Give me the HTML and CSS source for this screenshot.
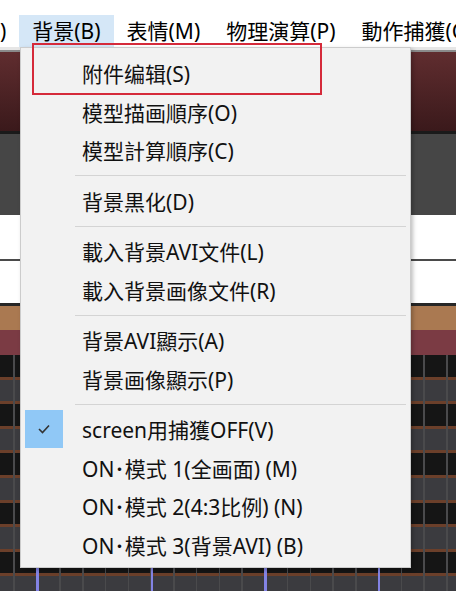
FILE: index.html
```html
<!DOCTYPE html>
<html lang="zh">
<head>
    <meta charset="UTF-8">
    <meta name="viewport" content="width=device-width, initial-scale=1.0">
    <title>背景メニュー</title>
    <link rel="stylesheet" href="styles.css">
</head>
<body>
    <div class="screen">
        <div class="menubar">
            <span class="menubar-item first">)</span>
            <span class="menubar-item open">背景(B)</span>
            <span class="menubar-item">表情(M)</span>
            <span class="menubar-item">物理演算(P)</span>
            <span class="menubar-item">動作捕獲(C)</span>
        </div>

        <div class="toolstrip"></div>
        <div class="viewport"></div>
        <div class="props"></div>
        <div class="field"></div>
        <div class="field last"></div>
        <div class="track-head"></div>
        <div class="track-key"></div>
        <div class="timeline"></div>

        <div class="menu">
            <div class="menu-item"><span class="gutter"></span>附件编辑(S)</div>
            <div class="menu-item"><span class="gutter"></span>模型描画順序(O)</div>
            <div class="menu-item"><span class="gutter"></span>模型計算順序(C)</div>
            <div class="separator"></div>
            <div class="menu-item"><span class="gutter"></span>背景黒化(D)</div>
            <div class="separator"></div>
            <div class="menu-item"><span class="gutter"></span>載入背景AVI文件(L)</div>
            <div class="menu-item"><span class="gutter"></span>載入背景画像文件(R)</div>
            <div class="separator"></div>
            <div class="menu-item"><span class="gutter"></span>背景AVI顯示(A)</div>
            <div class="menu-item"><span class="gutter"></span>背景画像顯示(P)</div>
            <div class="separator"></div>
            <div class="menu-item">
                <span class="gutter">
                    <span class="check">
                        <svg width="12" height="10" viewBox="0 0 12 10">
                            <polyline points="1,5 4.5,8.5 11,1.5" fill="none" stroke="#333" stroke-width="1.6"/>
                        </svg>
                    </span>
                </span>screen用捕獲OFF(V)
            </div>
            <div class="menu-item"><span class="gutter"></span>ON･模式 1(全画面) (M)</div>
            <div class="menu-item"><span class="gutter"></span>ON･模式 2(4:3比例) (N)</div>
            <div class="menu-item"><span class="gutter"></span>ON･模式 3(背景AVI) (B)</div>
        </div>

        <div class="annotation"></div>
    </div>
</body>
</html>
```

FILE: styles.css
```css
* {
    box-sizing: border-box;
}

body {
    margin: 0;
    background: #fff;
    font-family: "Noto Sans", "Noto Sans CJK SC", sans-serif;
}

.screen {
    position: relative;
    width: 456px;
    height: 591px;
    overflow: hidden;
}

/* menu bar */
.menubar {
    display: flex;
    height: 47px;
    padding-top: 15px;
    background: #fff;
    font-size: 21px;
    color: #000;
}

.menubar-item {
    padding: 0 13px;
    line-height: 32px;
    white-space: nowrap;
}

.menubar-item.first {
    padding-left: 0;
}

.menubar-item.open {
    background: #d5e7f7;
}

/* window behind the menu */
.toolstrip {
    height: 5px;
    background: #e6e6e6;
    border-bottom: 2px solid #8a8a8a;
}

.viewport {
    height: 82px;
    background: linear-gradient(#602d2f, #3a191b);
    border-bottom: 3px solid #1a1a1a;
}

.props {
    height: 81px;
    background: #464646;
}

.field {
    height: 46px;
    background: #fff;
    border-bottom: 2px solid #4a4a4a;
}

.field.last {
    height: 45px;
    border-bottom: 3px solid #262626;
}

.track-head {
    height: 24px;
    background: #aa7951;
}

.track-key {
    height: 25px;
    background: #7b3b44;
}

.timeline {
    height: 236px;
    background-color: #151515;
    background-image:
        repeating-linear-gradient(90deg, #8383e4 0 2px, transparent 2px 113.75px),
        repeating-linear-gradient(90deg, #4a4a4c 0 1.5px, transparent 1.5px 22.75px),
        repeating-linear-gradient(180deg, #151515 0 21.6px, #6b3f2a 21.6px 24.6px, #3b3b3f 24.6px 46.2px, #6b3f2a 46.2px 49.2px);
    background-position: 37px 0, 14px 0, 0 0;
}

/* dropdown */
.menu {
    position: absolute;
    left: 20px;
    top: 47px;
    width: 391px;
    padding: 6px 0 3px;
    background: #f2f2f2;
    border: 1px solid #cccccc;
    box-shadow: 2px 2px 4px rgba(0, 0, 0, 0.25);
    font-size: 21px;
    color: #111;
}

.menu-item {
    display: flex;
    align-items: center;
    height: 38.5px;
    white-space: nowrap;
}

.gutter {
    flex: none;
    display: flex;
    align-items: center;
    width: 61px;
    padding-left: 4px;
}

.check {
    display: flex;
    align-items: center;
    justify-content: center;
    width: 38px;
    height: 38px;
    background: #90c8f6;
}

.separator {
    height: 1px;
    margin: 5.5px 4px 5.5px 54px;
    background: #d4d4d4;
}

/* red highlight drawn over the screenshot */
.annotation {
    position: absolute;
    left: 32px;
    top: 43px;
    width: 290px;
    height: 52px;
    border: 2px solid #d52a3a;
}
```
